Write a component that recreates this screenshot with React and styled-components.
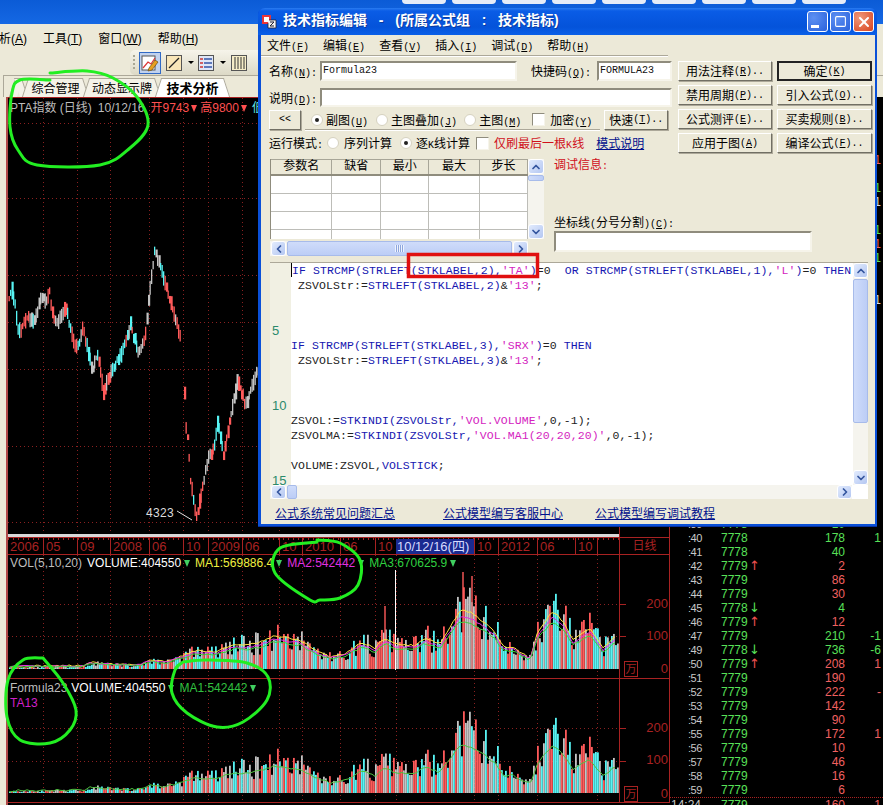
import React from "react";
import styled, { createGlobalStyle } from "styled-components";
import { ChevronUp, ChevronDown, ChevronLeft, ChevronRight, X, Square } from "lucide-react";

const Global = createGlobalStyle`
  html, body { margin: 0; padding: 0; width: 883px; height: 805px; overflow: hidden; background: #000; }
  * { box-sizing: border-box; }
`;

const UI = `"Liberation Sans", "Noto Sans CJK SC", sans-serif`;
const MONO = `"Liberation Mono", "Noto Sans CJK SC", monospace`;
const RED = "#a82222";

/* ---------- chart data ---------- */
const rng = (seed) => { let s = seed; return () => (s = (s * 16807) % 2147483647) / 2147483647; };
const interp = (pts, x) => {
  for (let i = 1; i < pts.length; i++) {
    if (x <= pts[i][0]) {
      const [x0, y0] = pts[i - 1]; const [x1, y1] = pts[i];
      return y0 + ((y1 - y0) * (x - x0)) / (x1 - x0);
    }
  }
  return pts[pts.length - 1][1];
};
const PRICE = [[8,300],[11,288],[15,308],[17,330],[20,332],[26,317],[33,323],[37,310],[41,295],[45,302],[49,292],[53,320],[58,322],[65,308],[72,337],[77,350],[82,327],[88,353],[92,370],[97,353],[103,392],[108,377],[115,363],[122,353],[130,325],[138,355],[145,333],[148,303],[154,250],[163,277],[172,310],[179,333],[183,368],[185,423],[187,438],[190,480],[196,518],[200,497],[207,460],[213,450],[217,423],[223,455],[230,417],[237,380],[245,405],[257,373]];
const ENV = [[8,2],[85,3],[90,7],[110,5],[140,4],[150,10],[165,8],[180,14],[195,22],[215,20],[235,30],[245,28],[260,32],[275,40],[285,38],[300,35],[315,22],[330,14],[345,18],[362,32],[375,25],[385,38],[395,30],[415,28],[425,38],[440,30],[452,55],[460,72],[470,70],[483,58],[495,45],[503,26],[513,26],[530,12],[538,46],[553,72],[565,55],[573,35],[590,50],[603,25],[616,40]];
const COLORS = ["#ff5a5a", "#58f4f4", "#c4c4c4"];
const DOT_X = [43,77,110,149,183,208,242,279,302,340,375,396,474,498,537,597];

const priceSticks = (() => {
  const r = rng(77); const out = [];
  let c = COLORS[0];
  for (let x = 8.5; x < 258; x += 1.5) {
    if (x > 180 && x < 183) continue;
    const p = interp(PRICE, x); const a = r();
    if (r() > 0.55) c = COLORS[Math.floor(r() * 3)];
    const top = p - 2 - a * 7; const bot = Math.min(p + 2 + r() * 7, 521);
    out.push(<rect key={x} x={x} y={top} width={r() > 0.7 ? 2.2 : 1.3} height={bot - top} fill={c} />);
  }
  return out;
})();

const volBars = (base, seed) => {
  const r = rng(seed); const out = [];
  for (let x = 9; x < 618; x += 2) {
    const e = interp(ENV, x); const a = r();
    const h = Math.max(1, e * (0.45 + 0.75 * a));
    const c = COLORS[Math.floor(r() * 3)];
    out.push(<rect key={x} x={x} y={base - h} width={1.8} height={h} fill={c} />);
  }
  return out;
};
const maLine = (base, f, seed) => {
  const r = rng(seed); const p = [];
  for (let x = 9; x < 618; x += 3) p.push(`${x},${(base - interp(ENV, x) * f - r() * 2).toFixed(1)}`);
  return p.join(" ");
};
const Grid = ({ ys, top, h, xs = DOT_X }) => (
  <g stroke="#8a2020" strokeWidth="1" strokeDasharray="1 3">
    {ys.map((y) => <line key={y} x1="8" x2="619" y1={y + 0.5} y2={y + 0.5} />)}
    {xs.map((x) => <line key={x} x1={x + 0.5} x2={x + 0.5} y1={top} y2={top + h} />)}
  </g>
);
const smooth = (pts) => {
  let d = `M${pts[0][0]} ${pts[0][1]}`;
  for (let i = 0; i < pts.length - 1; i++) {
    const p0 = pts[Math.max(i - 1, 0)], p1 = pts[i], p2 = pts[i + 1], p3 = pts[Math.min(i + 2, pts.length - 1)];
    d += ` C${p1[0] + (p2[0] - p0[0]) / 6} ${p1[1] + (p2[1] - p0[1]) / 6} ${p2[0] - (p3[0] - p1[0]) / 6} ${p2[1] - (p3[1] - p1[1]) / 6} ${p2[0]} ${p2[1]}`;
  }
  return d;
};
const SCRIBBLES = [
  [[50,73],[87,71],[113,78],[137,97],[148,125],[130,148],[100,165],[37,165],[18,150],[10,127],[12,93],[20,80],[50,80]],
  [[317,542],[280,548],[275,573],[310,600],[320,600],[340,598],[358,585],[360,560],[340,543],[317,540]],
  [[43,658],[23,660],[8,680],[7,717],[20,740],[50,743],[70,730],[76,710],[63,683],[43,658]],
  [[183,662],[207,660],[247,663],[268,677],[267,700],[243,722],[217,727],[187,713],[172,693],[175,670],[183,662]],
];

/* ---------- main window ---------- */
const Page = styled.div`position: relative; width: 883px; height: 805px; overflow: hidden; display: flex; flex-direction: column; background: #ece9d8; font-family: ${UI}; font-size: 12px; color: #000;`;
const AppTitle = styled.div`height: 24px; flex: none; background: linear-gradient(180deg, #0b5bd6, #1568e4); display: flex; gap: 6px; padding-left: 402px;`;
const Pill = styled.div`width: 44px; height: 4px; background: #e6edf8; border-radius: 0 0 6px 6px;`;
const MenuBar = styled.div`height: 26px; flex: none; display: flex; align-items: center; gap: 16px; margin-left: -13px;`;
const ToolRow = styled.div`height: 25px; flex: none; padding-left: 130px;`;
const Toolbar = styled.div`height: 25px; width: 200px; display: flex; align-items: center; background: linear-gradient(180deg, #f6f4ea, #dcd9c6); border-radius: 5px 0 0 5px;`;
const Grip = styled.div`width: 2px; height: 16px; margin-left: 3px; background: repeating-linear-gradient(180deg, #a9a794 0 2px, transparent 2px 4px);`;
const ActiveTool = styled.div`width: 22px; height: 22px; margin-left: 4px; border: 1px solid #316ac5; background: #c1d2ee; display: flex; align-items: center; justify-content: center;`;
const Tool = styled.div`width: 16px; height: 16px; margin-left: ${(p) => p.$ml}px; display: flex;`;
const Drop = styled.div`width: 0; height: 0; margin-left: 6px; border: 3px solid transparent; border-top: 3px solid #000; border-bottom: 0;`;
const TabRow = styled.div`height: 22px; flex: none; margin-left: 3px; border: 1px solid #aca899; border-width: 1px 0 0 1px; display: flex; align-items: flex-end; padding-left: 8px;`;
const Tab = styled.div`
  position: relative; height: 19px; width: ${(p) => p.$w}px; display: flex; align-items: center; justify-content: center;
  font-weight: ${(p) => (p.$on ? 700 : 400)}; font-size: ${(p) => (p.$on ? 13 : 12)}px; z-index: ${(p) => (p.$on ? 1 : 0)};
  &::before, &::after { content: ""; position: absolute; top: 0; bottom: 0; width: 55%; background: ${(p) => (p.$on ? "#fff" : "#f4f2e8")}; border-top: 1px solid #aca899; z-index: -1; }
  &::before { left: 0; border-left: 1px solid #aca899; transform: skewX(-18deg); }
  &::after { right: 0; border-right: 1px solid #aca899; transform: skewX(18deg); }
`;
const Workspace = styled.div`flex: 1; display: flex; min-height: 0; padding-left: 6px; background: #ece9d8;`;
const Charts = styled.div`width: 664px; flex: none; border-left: 2px solid #b24a4a; background: #000; display: flex; flex-direction: column;`;
const PaneRow = styled.div`display: flex; flex: none; height: ${(p) => p.$h}px; border: 0 solid ${RED}; border-top-width: ${(p) => (p.$t ? 1 : 0)}px; border-bottom-width: ${(p) => (p.$b ? 1 : 0)}px;`;
const Plot = styled.div`position: relative; width: 611px; flex: none; overflow: hidden;`;
const AxisCol = styled.div`position: relative; width: 51px; flex: none; border: 0 solid ${RED}; border-width: 0 1px; color: ${RED}; font-size: 13px;`;
const PlotSvg = styled.svg`position: absolute; left: 0; top: 0; display: block;`;
const Legend = styled.div`position: relative; display: flex; align-items: center; height: ${(p) => p.$h || 16}px; padding-left: 2px; margin-top: ${(p) => p.$mt || 0}px; color: #bdbdbd; white-space: nowrap; line-height: 16px;`;
const Lv = styled.span`color: ${(p) => p.$c}; margin-left: ${(p) => p.$ml || 0}px;`;
const Tri = styled.i`display: inline-block; width: 0; height: 0; border: 3px solid transparent; border-top: 7px solid ${(p) => p.$c}; border-bottom: 0; margin: 0 ${(p) => p.$r ?? 5}px 0 ${(p) => p.$l ?? 3}px;`;
const LowMark = styled.span`position: absolute; left: 138px; top: ${513 - 98 - 8}px; color: #dcdcdc; line-height: 16px; letter-spacing: .3px;`;
const WhiteRule = styled.div`height: 3px; background: #d8d8d8;`;
const Axis = styled.div`display: flex; height: 100%; background: repeating-linear-gradient(90deg, ${RED} 0 1px, transparent 1px 5px) top left / 100% 2px no-repeat; color: ${RED}; font-size: 13px; line-height: 17px; padding-left: 0;`;
const AxisCell = styled.div`width: ${(p) => p.$w}px; flex: none; border-left: ${(p) => (p.$first ? 0 : 1)}px solid ${RED}; padding-left: 2px; overflow: hidden; white-space: nowrap;`;
const DateChip = styled.div`width: 78px; flex: none; height: 15px; margin-top: 1px; background: #1a2a90; color: #d8dcff; line-height: 15px; padding-left: 1px; white-space: nowrap;`;
const AxisTitle = styled.div`text-align: center; line-height: 16px; font-size: 12px; color: ${RED};`;
const AxisLabel = styled.span`position: absolute; right: 1px; top: ${(p) => p.$y - 8}px; line-height: 16px;`;
const AxisTick = styled.i`position: absolute; left: 0; width: 6px; height: 1px; top: ${(p) => p.$y}px; background: ${RED};`;
const UnitBox = styled.span`position: absolute; left: 4px; top: ${(p) => p.$y}px; width: 14px; height: 16px; border: 1px solid ${RED}; font-size: 11px; line-height: 14px; text-align: center;`;

/* ---------- tick list ---------- */
const Ticks = styled.div`flex: 1; min-width: 0; background: #000; overflow: hidden;`;
const TickRow = styled.div`display: grid; grid-template-columns: 32px 47px 14px 82px 36px; height: 14px; line-height: 14px; font-size: 12px; white-space: nowrap; border-top: ${(p) => (p.$sep ? `1px dotted ${RED}` : "0")};`;
const TickTime = styled.span`text-align: ${(p) => (p.$long ? "left" : "right")}; color: #c8c8c8; font-size: ${(p) => (p.$long ? 12 : 11)}px; letter-spacing: ${(p) => (p.$long ? 0 : -0.4)}px; padding-left: ${(p) => (p.$long ? 1 : 0)}px;`;
const TickPrice = styled.span`padding-left: 19px; color: #58e058;`;
const TickArrow = styled.span`font-family: "DejaVu Sans", sans-serif; font-size: 13px; color: ${(p) => (p.$up ? "#f05050" : "#58e058")};`;
const TickNum = styled.span`text-align: right; color: ${(p) => p.$c || (p.$up ? "#f06060" : "#58e058")};`;
const RAW = [
  [":40", 7778, "", 178, 0, "1"],[":41", 7778, "", 40, 0, ""],[":42", 7779, "u", 2, 1, ""],[":43", 7779, "", 86, 1, ""],[":44", 7779, "", 30, 1, ""],
  [":45", 7778, "d", 4, 0, ""],[":46", 7779, "u", 12, 1, ""],[":47", 7779, "", 210, 0, "-1"],[":49", 7778, "d", 736, 0, "-6"],[":50", 7779, "u", 208, 1, "1"],
  [":51", 7779, "", 190, 1, ""],[":52", 7779, "", 222, 1, "-"],[":53", 7779, "", 142, 1, ""],[":54", 7779, "", 90, 1, ""],[":55", 7779, "", 172, 1, "1"],
  [":56", 7779, "", 10, 1, ""],[":57", 7779, "", 46, 1, ""],[":58", 7779, "", 16, 1, ""],[":59", 7779, "", 6, 1, ""],["14:24", 7779, "", 160, 1, "1"],
];
/* only the last column of the rows above peeks out beside the dialog */
const UPPER_COL = ["#f06060", "#58e058", "#dddddd"];
const UPPER = { 4: 0, 6: 1, 7: 2, 9: 1, 10: 0, 11: 1, 14: 2 };

/* ---------- dialog ---------- */
const Dialog = styled.div`position: absolute; left: 258px; top: 8px; width: 619px; height: 519px; z-index: 5; background: #0a50d8; border-radius: 7px 7px 0 0; display: flex; flex-direction: column; padding: 0 2px 3px 3px; font-family: ${MONO}; font-size: 12px; box-shadow: inset 0 -1px 0 #06309f;`;
const DTitle = styled.div`height: 27px; flex: none; display: flex; align-items: center; margin: 0 -2px 0 -3px; padding: 0 3px 0 4px; border-radius: 7px 7px 0 0; background: linear-gradient(180deg, #2a7cf0 0, #0a5ce6 3px, #0453da 70%, #0a5fe8 100%); color: #fff; font-weight: 700; font-size: 14px; line-height: 16px; white-space: pre;`;
const DTitleText = styled.span`margin: 0 0 3px 6px; flex: 1; font-family: ${UI}; word-spacing: 2px; text-shadow: 1px 1px 0 #0a3aa0;`;
const WinBtn = styled.div`width: 21px; height: 21px; margin-left: 2px; border: 1px solid #fff; border-radius: 3px; display: flex; align-items: center; justify-content: center; color: #fff; background: ${(p) => (p.$close ? "radial-gradient(circle at 30% 30%, #f0987a, #d8431e)" : "radial-gradient(circle at 30% 30%, #5d90f2, #2a62dc)")};`;
const MinBar = styled.i`width: 8px; height: 3px; background: #fff; margin: 10px 6px 0 0;`;
const DBody = styled.div`flex: 1; min-height: 0; background: #ece9d8; display: flex; flex-direction: column;`;
const DMenu = styled.div`height: 20px; flex: none; display: flex; align-items: center; gap: 14px; padding-left: 6px;`;
const MenuRule = styled.div`height: 2px; width: 407px; flex: none; border-top: 1px solid #aca899; border-bottom: 1px solid #fff;`;
const Key = styled.span`font-family: "Liberation Mono", monospace; font-size: 10px;`;
const Hot = ({ c, tail }) => <Key>(<u>{c}</u>){tail}</Key>;
const FormArea = styled.div`display: flex; flex: none; padding: 4px 0 0 8px; height: 96px;`;
const FormLeft = styled.div`width: 409px; flex: none; display: flex; flex-direction: column;`;
const FormRow = styled.div`position: relative; display: flex; align-items: center; height: ${(p) => p.$h}px; margin-top: ${(p) => p.$mt || 0}px; white-space: nowrap; flex: none;`;
const Groove = styled.i`position: absolute; left: 36px; bottom: 0; width: 295px; height: 2px; border-top: 1px solid #aca899; border-bottom: 1px solid #fff;`;
const FieldLabel = styled.span`width: ${(p) => p.$w}px; flex: none; margin-left: ${(p) => p.$ml || 0}px;`;
const Field = styled.div`width: ${(p) => p.$w}px; height: ${(p) => p.$h || 20}px; flex: none; background: #fff; border: 2px solid; border-color: #8f8c7d #f6f4ea #f6f4ea #8f8c7d; font-family: "Liberation Mono", monospace; font-size: 10px; line-height: 14px; padding: 1px 0 0 1px; color: #111;`;
const RaisedBtn = styled.div`
  width: ${(p) => p.$w}px; height: ${(p) => p.$h || 20}px; flex: none; margin-left: ${(p) => p.$ml || 0}px; background: #ece9d8;
  border: ${(p) => (p.$def ? "2px solid #222" : "1px solid")}; border-color: ${(p) => (p.$def ? "#222" : "#fff #716f64 #716f64 #fff")};
  box-shadow: ${(p) => (p.$def ? "none" : "1px 1px 0 #aca899")}; display: flex; align-items: center; justify-content: center; white-space: nowrap;
`;
const BtnCol = styled.div`width: ${(p) => p.$w}px; margin-left: ${(p) => p.$ml}px; flex: none; display: flex; flex-direction: column; gap: 4px;`;
const Option = styled.span`display: inline-flex; align-items: center; gap: ${(p) => p.$g ?? 3}px; margin-left: ${(p) => p.$ml || 0}px; color: ${(p) => p.$c || "inherit"};`;
const Radio = styled.i`width: 12px; height: 12px; border-radius: 50%; background: #fff; border: 1px solid #d6d2c0; display: flex; align-items: center; justify-content: center; &::after { content: ""; width: 4px; height: 4px; border-radius: 50%; background: ${(p) => (p.$on ? "#222" : "transparent")}; }`;
const Check = styled.i`width: 13px; height: 13px; background: #fff; border: 1px solid; border-color: #8f8c7d #f6f4ea #f6f4ea #8f8c7d;`;
const LinkText = styled.span`color: #00108c; text-decoration: underline; margin-left: ${(p) => p.$ml || 0}px; white-space: nowrap;`;
const MidArea = styled.div`display: flex; flex: none; margin: 6px 0 0 9px; height: 97px;`;
const TableBlock = styled.div`width: 274px; flex: none; display: flex; flex-direction: column; gap: 2px;`;
const TableTop = styled.div`display: flex; height: 80px; flex: none;`;
const Grid2 = styled.table`width: 258px; flex: none; height: 80px; border-collapse: collapse; table-layout: fixed; background: #fff; display: block; overflow: hidden; border-left: 1px solid #8f8c7d;`;
const Th = styled.th`height: 15px; width: ${(p) => p.$w}px; padding: 0; font-weight: 400; background: #ece9d8; border: 1px solid #a8a698; border-bottom: 2px solid #8f8c7d; border-left: 0; line-height: 14px;`;
const Td = styled.td`height: 18px; padding: 0; border: 1px solid #bdbdb8; border-left: 0;`;
const VBar = styled.div`width: ${(p) => p.$w}px; flex: none; display: flex; flex-direction: column; background: #f5f4ee; height: ${(p) => p.$h};`;
const HBar = styled.div`height: ${(p) => p.$h}px; flex: none; display: flex; align-items: stretch; background: #f5f4ee; padding-left: 1px; width: ${(p) => p.$w}px;`;
const ArrowBtn = styled.div`flex: none; width: ${(p) => (p.$v ? "100%" : "15px")}; height: ${(p) => (p.$v ? "15px" : "100%")}; display: flex; align-items: center; justify-content: center; color: #34559e; background: linear-gradient(135deg, #e2ebfd, #b4c7f2); border: 1px solid #fff; border-radius: 3px;`;
const Thumb = styled.div`
  flex: ${(p) => (p.$grow ? "1" : "none")}; ${(p) => (p.$v ? `height: ${p.$s}px; margin: 1px 0;` : `width: ${p.$s}px; margin: 0 1px;`)}
  background: linear-gradient(${(p) => (p.$v ? "90deg" : "180deg")}, #cfdcfa, #bccdf6); border: 1px solid #a7bbea; border-radius: 2px; display: flex; align-items: center; justify-content: center;
`;
const GripLines = styled.i`width: 9px; height: 7px; background: repeating-linear-gradient(90deg, #eef3fe 0 1px, #8ea6dc 1px 2px);`;
const Fill = styled.div`flex: 1;`;
const InfoBlock = styled.div`margin-left: 10px; width: 258px; height: 93px; flex: none; display: flex; flex-direction: column;`;
const DebugText = styled.div`color: #d0101a; line-height: 14px;`;
const CoordLabel = styled.div`margin-top: auto; line-height: 12px;`;
const Editor = styled.div`flex: none; margin: 6px 0 0 9px; width: 598px; height: 237px; background: #fff; border-top: 1px solid #aca899; display: flex; flex-direction: column;`;
const EditorTop = styled.div`flex: 1; min-height: 0; display: flex;`;
const CodeArea = styled.div`flex: 1; min-width: 0; overflow: hidden;`;
const CodeRow = styled.div`display: flex; height: 15px; line-height: 15px;`;
const LineNo = styled.span`width: 21px; flex: none; background: #f1f0e3; color: #2b8a6c; font-size: 13px; font-family: "Liberation Sans", sans-serif; padding-left: 2px;`;
const CodeText = styled.span`font-family: "Liberation Mono", monospace; font-size: 11.5px; letter-spacing: .09px; white-space: pre; color: #222;`;
const Tk = styled.span`color: ${(p) => (p.$k === "b" ? "#1616b0" : p.$k === "m" ? "#d423c0" : "#222")};`;
const Caret = styled.i`display: inline-block; width: 1px; height: 14px; background: #000; vertical-align: -3px;`;
const LinksRow = styled.div`flex: none; display: flex; padding: 9px 0 0 14px; line-height: 14px;`;
const Overlay = styled.svg`position: absolute; left: 0; top: 0; z-index: 6; pointer-events: none;`;

const code = [
  [["b","IF STRCMP(STRLEFT(STKLABEL,2),"],["m","'TA'"],["b",")"],["d","=0  "],["b","OR STRCMP(STRLEFT(STKLABEL,1),"],["m","'L'"],["b",")"],["d","=0 "],["b","THEN"]],
  [["d"," ZSVOLStr:="],["b","STRLEFT(STKLABEL,2)"],["d","&"],["m","'13'"],["d",";"]],
  [],[],[],
  [["b","IF STRCMP(STRLEFT(STKLABEL,3),"],["m","'SRX'"],["b",")"],["d","=0 "],["b","THEN"]],
  [["d"," ZSVOLStr:="],["b","STRLEFT(STKLABEL,3)"],["d","&"],["m","'13'"],["d",";"]],
  [],[],[],
  [["d","ZSVOL:="],["b","STKINDI(ZSVOLStr,"],["m","'VOL.VOLUME'"],["d",",0,-1);"]],
  [["d","ZSVOLMA:="],["b","STKINDI(ZSVOLStr,"],["m","'VOL.MA1(20,20,20)'"],["d",",0,-1);"]],
  [],
  [["d","VOLUME:ZSVOL,"],["b","VOLSTICK"],["d",";"]],
  [],
];

const AXIS = [[35,"2006"],[34,"05"],[33,"09"],[39,"2008"],[34,"06"],[25,"10"],[34,"2009"],[37,"06"],[23,"10"],[38,"2010"],[35,"06"],[21,"10"]];
const AXIS2 = [[24,"10"],[39,"2012"],[38,"06"],[22,"10"],[22,""]];

const Scrollers = {
  up: <ChevronUp size={12} strokeWidth={3.5} />, down: <ChevronDown size={12} strokeWidth={3.5} />,
  left: <ChevronLeft size={12} strokeWidth={3.5} />, right: <ChevronRight size={12} strokeWidth={3.5} />,
};

const TickLine = ({ row }) => {
  const [t, p, a, v, up, e] = row;
  return (
    <TickRow $sep={t === "14:24"}>
      <TickTime $long={t.length > 3}>{t}</TickTime>
      <TickPrice>{p}</TickPrice>
      <TickArrow $up={a === "u"}>{a === "u" ? "↑" : a === "d" ? "↓" : ""}</TickArrow>
      <TickNum $up={up}>{v}</TickNum>
      <TickNum $up={up}>{e}</TickNum>
    </TickRow>
  );
};

export default function App() {
  return (
    <Page>
      <Global />
      <AppTitle>{Array.from({ length: 9 }, (_, i) => <Pill key={i} />)}</AppTitle>
      <MenuBar>
        <span>分析(<u>A</u>)</span><span>工具(<u>T</u>)</span><span>窗口(<u>W</u>)</span><span>帮助(<u>H</u>)</span>
      </MenuBar>
      <ToolRow>
        <Toolbar>
          <Grip />
          <ActiveTool>
            <svg width="18" height="18" viewBox="0 0 18 18">
              <rect x="1" y="2" width="13" height="14" fill="#fff" stroke="#555" />
              <path d="M2 14 L7 8 L10 10 L14 4" fill="none" stroke="#d33" strokeWidth="1.2" />
              <path d="M8 14 L14 6 L17 8 L11 16 L7 17 Z" fill="#e8a020" stroke="#6a4a10" strokeWidth=".7" />
            </svg>
          </ActiveTool>
          <Tool $ml={5}>
            <svg width="16" height="16" viewBox="0 0 16 16"><rect x=".5" y=".5" width="15" height="15" fill="#f9e6b8" stroke="#555" /><path d="M3 13 L13 3" stroke="#222" strokeWidth="1.2" /></svg>
          </Tool>
          <Drop />
          <Tool $ml={4}>
            <svg width="16" height="16" viewBox="0 0 16 16"><rect x=".5" y=".5" width="15" height="15" fill="#dfe6f6" stroke="#555" /><path d="M2 4h3M2 8h3M2 12h3" stroke="#c33" strokeWidth="1.4" /><path d="M6 4h8M6 8h8M6 12h8" stroke="#3556a8" strokeWidth="1.4" /></svg>
          </Tool>
          <Drop />
          <Tool $ml={5}>
            <svg width="16" height="16" viewBox="0 0 16 16"><rect x=".5" y=".5" width="15" height="15" fill="#f6edc8" stroke="#555" /><path d="M4 2v12M7 2v12M10 2v12M13 2v12" stroke="#333" /></svg>
          </Tool>
        </Toolbar>
      </ToolRow>
      <TabRow>
        <Tab $w={13} />
        <Tab $w={61}>综合管理</Tab>
        <Tab $w={72}>动态显示牌</Tab>
        <Tab $w={69} $on>技术分析</Tab>
      </TabRow>
      <Workspace>
        <Charts>
          <PaneRow $h={437} $t>
            <Plot>
              <PlotSvg width="611" height="436" viewBox="8 98 611 436">
                <Grid ys={[123,198,275,322,369,446,522]} top={98} h={436} xs={DOT_X.slice(0, 8)} />
                {priceSticks}
                <path d="M177 511 L192 520" stroke="#ddd" strokeWidth="1" />
              </PlotSvg>
              <Legend $mt={2}>
                PTA指数 (日线)<Lv $ml={6}>10/12/16</Lv>
                <Lv $c="#ff5050" $ml={6}>开9743</Lv><Tri $c="#ff5050" $l={2} $r={3} />
                <Lv $c="#ff5050">高9800</Lv><Tri $c="#ff5050" $l={2} $r={1} />
                <Lv $c="#60e8e8" $ml={4}>低</Lv>
              </Legend>
              <LowMark>4323</LowMark>
            </Plot>
            <AxisCol />
          </PaneRow>
          <PaneRow $h={3}><Plot><WhiteRule /></Plot><AxisCol /></PaneRow>
          <PaneRow $h={18} $t $b>
            <Plot>
              <Axis>
                {AXIS.map(([w, t], i) => <AxisCell key={i} $w={w} $first={i === 0}>{t}</AxisCell>)}
                <DateChip>10/12/16(四)</DateChip>
                {AXIS2.map(([w, t], i) => <AxisCell key={i} $w={w}>{t}</AxisCell>)}
              </Axis>
            </Plot>
            <AxisCol><AxisTitle>日线</AxisTitle></AxisCol>
          </PaneRow>
          <PaneRow $h={124} $b>
            <Plot>
              <PlotSvg width="611" height="123" viewBox="8 555 611 123">
                <Grid ys={[604,636]} top={555} h={123} />
                {volBars(669, 11)}
                <path d="M463 669V572M472 669V576M385 669V606" stroke="#ff5a5a" strokeWidth="1.4" />
                <path d="M395.5 670V570" stroke="#fff" strokeWidth="1" />
                <polyline points={maLine(669, 0.8, 31)} fill="none" stroke="#ffe040" strokeWidth="1" />
                <polyline points={maLine(669, 0.72, 41)} fill="none" stroke="#e030e0" strokeWidth="1" />
                <polyline points={maLine(669, 0.65, 51)} fill="none" stroke="#40d040" strokeWidth="1" />
              </PlotSvg>
              <Legend>
                VOL(5,10,20)<Lv $c="#fff" $ml={5}>VOLUME:404550</Lv><Tri $c="#40d060" />
                <Lv $c="#f0f040">MA1:569886.4</Lv><Tri $c="#40d060" />
                <Lv $c="#e030e0">MA2:542442</Lv><Tri $c="#40d060" />
                <Lv $c="#30d040">MA3:670625.9</Lv><Tri $c="#40d060" />
              </Legend>
            </Plot>
            <AxisCol>
              <AxisTick $y={49} /><AxisTick $y={81} />
              <AxisLabel $y={49}>200</AxisLabel><AxisLabel $y={81}>100</AxisLabel><AxisLabel $y={114}>0</AxisLabel>
              <UnitBox $y={106}>万</UnitBox>
            </AxisCol>
          </PaneRow>
          <PaneRow $h={124} $b>
            <Plot>
              <PlotSvg width="611" height="123" viewBox="8 679 611 123">
                <Grid ys={[728,761]} top={679} h={123} />
                {volBars(793, 11)}
                <polyline points={maLine(793, 0.65, 61)} fill="none" stroke="#50c040" strokeWidth="1" />
              </PlotSvg>
              <Legend $mt={1}>
                Formula23<Lv $c="#fff" $ml={4}>VOLUME:404550</Lv><Tri $c="#40d060" />
                <Lv $c="#30c040">MA1:542442</Lv><Tri $c="#40d060" />
              </Legend>
              <Legend $h={14}><Lv $c="#d020c8">TA13</Lv></Legend>
            </Plot>
            <AxisCol>
              <AxisTick $y={49} /><AxisTick $y={82} />
              <AxisLabel $y={49}>200</AxisLabel><AxisLabel $y={81}>100</AxisLabel><AxisLabel $y={115}>0</AxisLabel>
              <UnitBox $y={107}>万</UnitBox>
            </AxisCol>
          </PaneRow>
        </Charts>
        <Ticks>
          {Array.from({ length: 30 }, (_, i) => (
            <TickRow key={i}>
              <span /><span /><span /><span />
              <TickNum $c={UPPER[i] !== undefined ? UPPER_COL[UPPER[i]] : undefined}>{UPPER[i] !== undefined ? "1" : ""}</TickNum>
            </TickRow>
          ))}
          <TickLine row={[":39", 7778, "", 10, 0, ""]} />
          {RAW.map((row) => <TickLine key={row[0]} row={row} />)}
        </Ticks>
      </Workspace>

      <Dialog>
        <DTitle>
          <svg width="15" height="15" viewBox="0 0 15 15">
            <rect x="0" y="1" width="9" height="9" fill="#e8353a" /><rect x="2" y="3" width="5" height="5" fill="#fff" />
            <path d="M7 6h7v8H6V9" fill="#f4f4f4" stroke="#223" strokeWidth=".8" /><path d="M8 8h4L8 12h4" fill="none" stroke="#223" strokeWidth="1" />
          </svg>
          <DTitleText>技术指标编辑  -  (所属公式组  :  技术指标)</DTitleText>
          <WinBtn><MinBar /></WinBtn>
          <WinBtn><Square size={13} strokeWidth={2} /></WinBtn>
          <WinBtn $close><X size={16} strokeWidth={3} /></WinBtn>
        </DTitle>
        <DBody>
          <DMenu>
            <span>文件<Hot c="F" /></span><span>编辑<Hot c="E" /></span><span>查看<Hot c="V" /></span>
            <span>插入<Hot c="I" /></span><span>调试<Hot c="D" /></span><span>帮助<Hot c="H" /></span>
          </DMenu>
          <MenuRule />
          <FormArea>
            <FormLeft>
              <FormRow $h={20}>
                <FieldLabel $w={51}>名称<Hot c="N" tail=":" /></FieldLabel>
                <Field $w={197}>Formula23</Field>
                <FieldLabel $w={66} $ml={14}>快捷码<Hot c="Q" tail=":" /></FieldLabel>
                <Field $w={75}>FORMULA23</Field>
              </FormRow>
              <FormRow $h={19} $mt={7}>
                <FieldLabel $w={51}>说明<Hot c="D" tail=":" /></FieldLabel>
                <Field $w={352} $h={19} />
              </FormRow>
              <FormRow $h={23} $mt={1}>
                <RaisedBtn $w={32}><Key>{"<<"}</Key></RaisedBtn>
                <Option $ml={10}><Radio $on /><span>副图<Hot c="U" /></span></Option>
                <Option $ml={8}><Radio /><span>主图叠加<Hot c="J" /></span></Option>
                <Option $ml={7}><Radio /><span>主图<Hot c="M" /></span></Option>
                <Option $ml={11} $g={5}><Check /><span>加密<Hot c="Y" /></span></Option>
                <RaisedBtn $w={64} $ml={12}>快速<Hot c="T" tail=".." /></RaisedBtn>
                <Groove />
              </FormRow>
              <FormRow $h={18} $mt={3}>
                <span>运行模式<Key>:</Key></span>
                <Option $ml={4} $g={5}><Radio /><span>序列计算</span></Option>
                <Option $ml={8} $g={4}><Radio $on /><span>逐<Key>K</Key>线计算</span></Option>
                <Option $ml={6} $g={5} $c="#d0101a"><Check /><span>仅刷最后一根<Key>K</Key>线</span></Option>
                <LinkText $ml={12}>模式说明</LinkText>
              </FormRow>
            </FormLeft>
            <BtnCol $w={94} $ml={0}>
              <RaisedBtn $w={94}>用法注释<Hot c="R" tail=".." /></RaisedBtn>
              <RaisedBtn $w={94}>禁用周期<Hot c="P" tail=".." /></RaisedBtn>
              <RaisedBtn $w={94}>公式测评<Hot c="E" tail=".." /></RaisedBtn>
              <RaisedBtn $w={94}>应用于图<Hot c="A" /></RaisedBtn>
            </BtnCol>
            <BtnCol $w={95} $ml={5}>
              <RaisedBtn $w={95} $def>确定<Hot c="K" /></RaisedBtn>
              <RaisedBtn $w={95}>引入公式<Hot c="O" tail=".." /></RaisedBtn>
              <RaisedBtn $w={95}>买卖规则<Hot c="B" tail=".." /></RaisedBtn>
              <RaisedBtn $w={95}>编译公式<Hot c="F" tail=".." /></RaisedBtn>
            </BtnCol>
          </FormArea>
          <MidArea>
            <TableBlock>
              <TableTop>
                <Grid2>
                  <thead><tr><Th $w={61}>参数名</Th><Th $w={49}>缺省</Th><Th $w={48}>最小</Th><Th $w={51}>最大</Th><Th $w={48}>步长</Th></tr></thead>
                  <tbody>{[0, 1, 2, 3].map((r) => <tr key={r}><Td /><Td /><Td /><Td /><Td /></tr>)}</tbody>
                </Grid2>
                <VBar $w={16} $h="80px">
                  <ArrowBtn $v>{Scrollers.up}</ArrowBtn>
                  <Thumb $v $s={6} /><Fill />
                  <ArrowBtn $v>{Scrollers.down}</ArrowBtn>
                </VBar>
              </TableTop>
              <HBar $h={15} $w={258}>
                <ArrowBtn>{Scrollers.left}</ArrowBtn>
                <Thumb $grow $s={220}><GripLines /></Thumb>
                <ArrowBtn>{Scrollers.right}</ArrowBtn>
              </HBar>
            </TableBlock>
            <InfoBlock>
              <DebugText>调试信息<Key>:</Key></DebugText>
              <CoordLabel>坐标线<Key>(</Key>分号分割<Key>)</Key><Hot c="C" tail=":" /></CoordLabel>
              <Field $w={258} $h={21} />
            </InfoBlock>
          </MidArea>
          <Editor>
            <EditorTop>
              <CodeArea>
                {code.map((line, i) => {
                  const n = i + 1;
                  return (
                    <CodeRow key={i}>
                      <LineNo>{n % 5 === 0 ? n : ""}</LineNo>
                      <CodeText>
                        {i === 0 && <Caret />}
                        {line.map(([k, t], j) => <Tk key={j} $k={k}>{t}</Tk>)}
                      </CodeText>
                    </CodeRow>
                  );
                })}
              </CodeArea>
              <VBar $w={15} $h="100%">
                <ArrowBtn $v>{Scrollers.up}</ArrowBtn>
                <Thumb $v $s={144} /><Fill />
                <ArrowBtn $v>{Scrollers.down}</ArrowBtn>
              </VBar>
            </EditorTop>
            <HBar $h={14} $w={582}>
              <ArrowBtn>{Scrollers.left}</ArrowBtn>
              <Thumb $s={10} /><Fill />
              <ArrowBtn>{Scrollers.right}</ArrowBtn>
            </HBar>
          </Editor>
          <LinksRow>
            <LinkText>公式系统常见问题汇总</LinkText>
            <LinkText $ml={48}>公式模型编写客服中心</LinkText>
            <LinkText $ml={32}>公式模型编写调试教程</LinkText>
          </LinksRow>
        </DBody>
      </Dialog>

      <Overlay width="883" height="805" viewBox="0 0 883 805">
        {SCRIBBLES.map((s, i) => <path key={i} d={smooth(s)} fill="none" stroke="#22ee22" strokeWidth="3" strokeLinecap="round" />)}
        <rect x="408.5" y="254.5" width="129" height="22" fill="none" stroke="#e01010" strokeWidth="3.5" />
      </Overlay>
    </Page>
  );
}
